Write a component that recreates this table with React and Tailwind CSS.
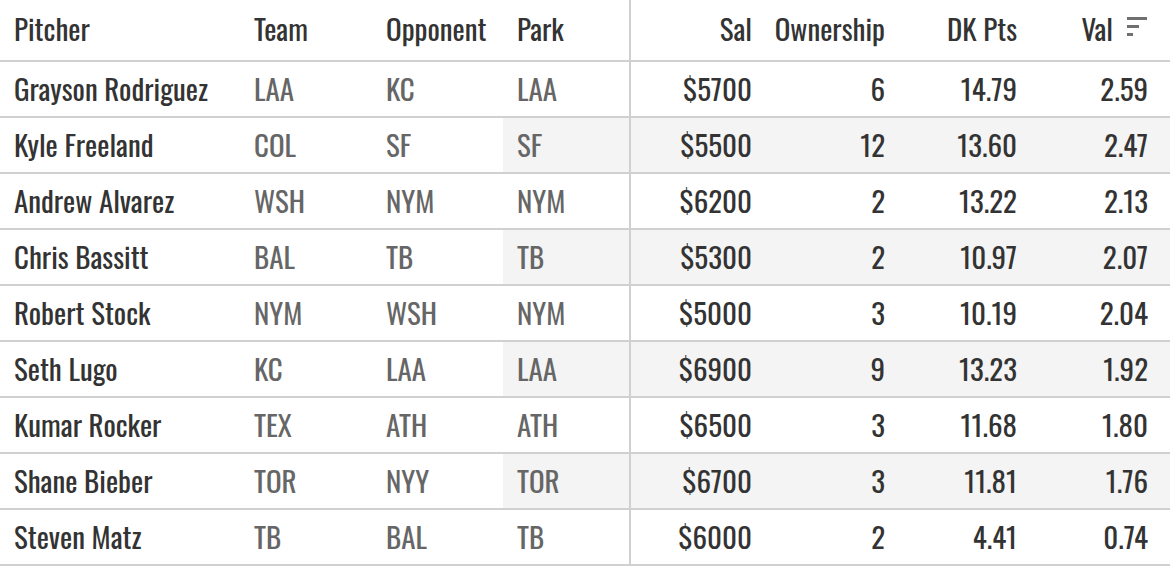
const rows = [
  ["Grayson Rodriguez", "LAA", "KC", "LAA", "$5700", "6", "14.79", "2.59"],
  ["Kyle Freeland", "COL", "SF", "SF", "$5500", "12", "13.60", "2.47"],
  ["Andrew Alvarez", "WSH", "NYM", "NYM", "$6200", "2", "13.22", "2.13"],
  ["Chris Bassitt", "BAL", "TB", "TB", "$5300", "2", "10.97", "2.07"],
  ["Robert Stock", "NYM", "WSH", "NYM", "$5000", "3", "10.19", "2.04"],
  ["Seth Lugo", "KC", "LAA", "LAA", "$6900", "9", "13.23", "1.92"],
  ["Kumar Rocker", "TEX", "ATH", "ATH", "$6500", "3", "11.68", "1.80"],
  ["Shane Bieber", "TOR", "NYY", "TOR", "$6700", "3", "11.81", "1.76"],
  ["Steven Matz", "TB", "BAL", "TB", "$6000", "2", "4.41", "0.74"],
];

const grid =
  "grid grid-cols-[240px_132px_131px_128px_135px_133px_132px_1fr] border-b-2 border-[#d0d0d0]";

function SortIcon() {
  return (
    <svg width="20" height="19" viewBox="0 0 20 19" className="ml-[14px] mb-[3px]">
      <rect x="0" y="0" width="20" height="3" fill="#707070" />
      <rect x="0" y="8" width="12" height="3" fill="#707070" />
      <rect x="0" y="16" width="6" height="3" fill="#707070" />
    </svg>
  );
}

export default function App() {
  return (
    <div className="w-[1170px] bg-white font-['Oswald',sans-serif] font-normal text-[29px] leading-none text-[#333]">
      {/* header */}
      <div className={grid + " h-[62px]"}>
        <div className="flex items-center pl-[14px] pb-[5px]">Pitcher</div>
        <div className="flex items-center pl-[14px] pb-[5px]">Team</div>
        <div className="flex items-center pl-[14px] pb-[5px]">Opponent</div>
        <div className="flex items-center pl-[14px] pb-[5px] border-r-2 border-[#d0d0d0]">Park</div>
        <div className="flex items-center justify-end pr-[14px] pb-[5px]">Sal</div>
        <div className="flex items-center justify-end pr-[14px] pb-[5px]">Ownership</div>
        <div className="flex items-center justify-end pr-[14px] pb-[5px]">DK Pts</div>
        <div className="flex items-center justify-end pr-[23px] pb-[5px]">
          Val
          <SortIcon />
        </div>
      </div>
      {/* rows, right half shaded on every other row */}
      {rows.map((r, i) => {
        const shade = i % 2 === 1 ? "bg-[#f4f4f4]" : "bg-white";
        return (
          <div key={r[0]} className={grid + " h-[56px]"}>
            <div className="flex items-center pl-[14px] pb-[4px]">{r[0]}</div>
            <div className="flex items-center pl-[14px] pb-[4px] text-[#666]">{r[1]}</div>
            <div className="flex items-center pl-[14px] pb-[4px] text-[#666]">{r[2]}</div>
            <div className={"flex items-center pl-[14px] pb-[4px] text-[#666] border-r-2 border-[#d0d0d0] " + shade}>
              {r[3]}
            </div>
            <div className={"flex items-center justify-end pr-[14px] pb-[4px] " + shade}>{r[4]}</div>
            <div className={"flex items-center justify-end pr-[14px] pb-[4px] " + shade}>{r[5]}</div>
            <div className={"flex items-center justify-end pr-[14px] pb-[4px] " + shade}>{r[6]}</div>
            <div className={"flex items-center justify-end pr-[22px] pb-[4px] " + shade}>{r[7]}</div>
          </div>
        );
      })}
    </div>
  );
}
